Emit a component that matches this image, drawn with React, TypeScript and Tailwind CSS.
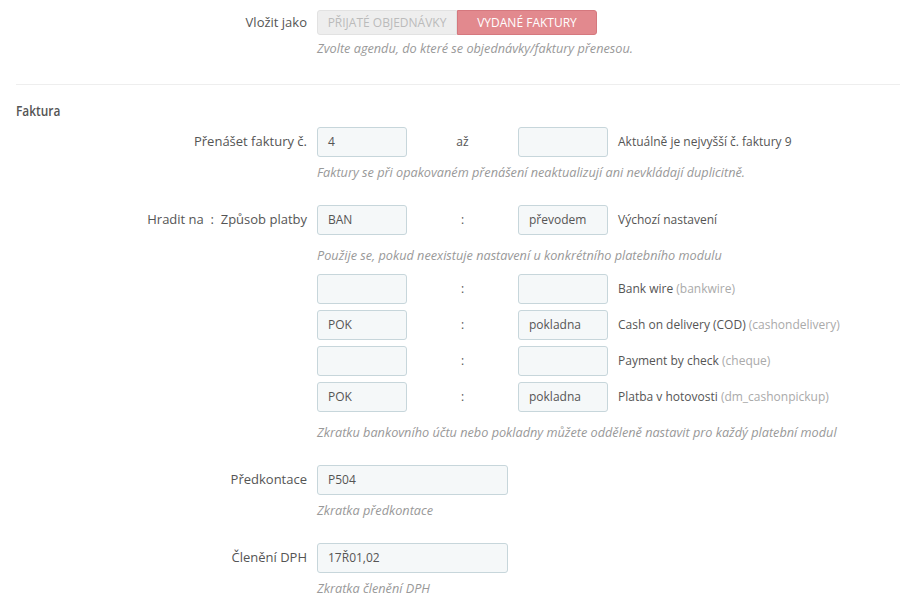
import React from "react";

const font = { fontFamily: '"Open Sans", "Noto Sans", sans-serif' };

function Input({ value = "", w = "w-[90px]" }: { value?: string; w?: string }) {
  return (
    <div
      className={`${w} h-[30px] rounded-[3px] border border-[#c7d6db] bg-[#f5f8f9] pl-[10px] flex items-center text-[12px] text-[#555]`}
    >
      {value}
    </div>
  );
}

function Help({ children }: { children: React.ReactNode }) {
  return <div className="text-[12.7px] italic text-[#999] leading-[18px]">{children}</div>;
}

function Label({ children }: { children: React.ReactNode }) {
  return (
    <div className="w-[317px] shrink-0 pr-[10px] text-right text-[13px] text-[#555] h-[30px] flex items-center justify-end whitespace-pre">
      {children}
    </div>
  );
}

function PayRow({ a, b, name, code }: { a: string; b: string; name: string; code: string }) {
  return (
    <div className="flex items-center h-[30px]">
      <Input value={a} />
      <div className="w-[111px] text-center text-[12px] text-[#555]">:</div>
      <Input value={b} />
      <div className="pl-[10px] text-[12px] text-[#555]">
        {name} <span className="text-[#aaa]">{code}</span>
      </div>
    </div>
  );
}

export default function App() {
  return (
    <div style={font} className="w-[900px] h-[600px] bg-white overflow-hidden text-[#555]">
      {/* Vložit jako */}
      <div className="flex pt-[10px]">
        <div className="w-[317px] shrink-0 pr-[10px] text-right text-[13px] h-[25px] flex items-center justify-end">
          Vložit jako
        </div>
        <div>
          <div className="flex h-[25px]">
            <div className="w-[140px] h-[25px] flex items-center justify-center rounded-l-[3px] border border-[#e2e2e2] bg-[#eeeeee] text-[12px] text-[#bbb] uppercase">
              Přijaté objednávky
            </div>
            <div className="w-[140px] h-[25px] flex items-center justify-center rounded-r-[3px] border border-[#d5787e] bg-[#e2898e] text-[12px] text-white uppercase">
              Vydané faktury
            </div>
          </div>
          <div className="mt-[4px]">
            <Help>Zvolte agendu, do které se objednávky/faktury přenesou.</Help>
          </div>
        </div>
      </div>

      <div className="ml-[16px] mt-[27px] h-[1px] bg-[#eeeeee]" />

      <div className="ml-[16px] mt-[16px] leading-[18px]">
        <span
          className="inline-block origin-left scale-x-[0.82] text-[14.5px] font-semibold text-[#555]"
          style={{ fontFamily: '"Open Sans", sans-serif' }}
        >
          Faktura
        </span>
      </div>

      {/* Přenášet faktury */}
      <div className="flex mt-[7px]">
        <Label>Přenášet faktury č.</Label>
        <div>
          <div className="flex items-center h-[30px]">
            <Input value="4" />
            <div className="w-[111px] text-center text-[12px]">až</div>
            <Input value="" />
            <div className="pl-[10px] text-[12px]">Aktuálně je nejvyšší č. faktury 9</div>
          </div>
          <div className="mt-[6px]">
            <Help>Faktury se při opakovaném přenášení neaktualizují ani nevkládají duplicitně.</Help>
          </div>
        </div>
      </div>

      {/* Hradit na */}
      <div className="flex mt-[24px]">
        <Label>{"Hradit na  :  Způsob platby"}</Label>
        <div>
          <PayRow a="BAN" b="převodem" name="Výchozí nastavení" code="" />
          <div className="mt-[11px]">
            <Help>Použije se, pokud neexistuje nastavení u konkrétního platebního modulu</Help>
          </div>
          <div className="mt-[10px] flex flex-col gap-[6px]">
            <PayRow a="" b="" name="Bank wire" code="(bankwire)" />
            <PayRow a="POK" b="pokladna" name="Cash on delivery (COD)" code="(cashondelivery)" />
            <PayRow a="" b="" name="Payment by check" code="(cheque)" />
            <PayRow a="POK" b="pokladna" name="Platba v hotovosti" code="(dm_cashonpickup)" />
          </div>
          <div className="mt-[11px]">
            <Help>Zkratku bankovního účtu nebo pokladny můžete odděleně nastavit pro každý platební modul</Help>
          </div>
        </div>
      </div>

      {/* Předkontace */}
      <div className="flex mt-[24px]">
        <Label>Předkontace</Label>
        <div>
          <Input value="P504" w="w-[191px]" />
          <div className="mt-[6px]">
            <Help>Zkratka předkontace</Help>
          </div>
        </div>
      </div>

      {/* Členění DPH */}
      <div className="flex mt-[24px]">
        <Label>Členění DPH</Label>
        <div>
          <Input value="17Ř01,02" w="w-[191px]" />
          <div className="mt-[6px]">
            <Help>Zkratka členění DPH</Help>
          </div>
        </div>
      </div>
    </div>
  );
}
